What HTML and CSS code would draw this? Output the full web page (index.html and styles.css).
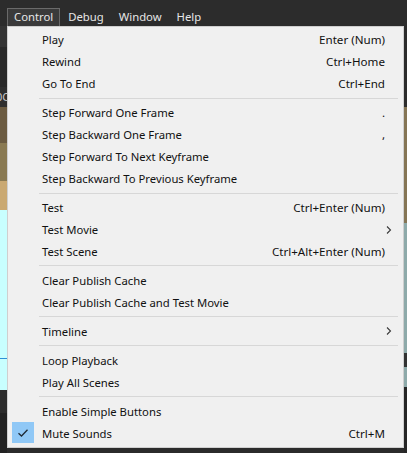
FILE: index.html
```html
<!DOCTYPE html>
<html>
<head>
<meta charset="utf-8">
<link rel="stylesheet" href="styles.css">
</head>
<body>
<div class="app">
  <div class="menubar">
    <span class="mb-item active">Control</span>
    <span class="mb-item">Debug</span>
    <span class="mb-item">Window</span>
    <span class="mb-item">Help</span>
  </div>
  <div class="workspace">
    <div class="edge left">
      <div class="band b1"></div>
      <div class="band b2"></div>
      <div class="band b3"><span class="clip">0C</span></div>
      <div class="band b4"></div>
      <div class="band b5"></div>
      <div class="band b6"></div>
      <div class="band b7"><div class="blueline"></div></div>
      <div class="band b8"></div>
      <div class="band b9"></div>
    </div>
    <div class="middle"></div>
    <div class="edge right">
      <div class="band r1"></div>
      <div class="band r2"></div>
      <div class="band r3"></div>
      <div class="band r4"></div>
      <div class="band r5"></div>
      <div class="band r6"></div>
    </div>
  </div>

  <div class="dropdown">
    <div class="row"><span class="label">Play</span><span class="key">Enter (Num)</span></div>
    <div class="row"><span class="label">Rewind</span><span class="key">Ctrl+Home</span></div>
    <div class="row"><span class="label">Go To End</span><span class="key">Ctrl+End</span></div>
    <div class="sep"></div>
    <div class="row"><span class="label">Step Forward One Frame</span><span class="key">.</span></div>
    <div class="row"><span class="label">Step Backward One Frame</span><span class="key">,</span></div>
    <div class="row"><span class="label">Step Forward To Next Keyframe</span><span class="key"></span></div>
    <div class="row"><span class="label">Step Backward To Previous Keyframe</span><span class="key"></span></div>
    <div class="sep"></div>
    <div class="row"><span class="label">Test</span><span class="key">Ctrl+Enter (Num)</span></div>
    <div class="row"><span class="label">Test Movie</span><span class="key"></span><svg class="arrow" width="6" height="8" viewBox="0 0 6 8"><path d="M1 0.5 L4.5 4 L1 7.5" fill="none" stroke="#3a3a3a" stroke-width="1.1"/></svg></div>
    <div class="row"><span class="label">Test Scene</span><span class="key">Ctrl+Alt+Enter (Num)</span></div>
    <div class="sep"></div>
    <div class="row"><span class="label">Clear Publish Cache</span><span class="key"></span></div>
    <div class="row"><span class="label">Clear Publish Cache and Test Movie</span><span class="key"></span></div>
    <div class="sep"></div>
    <div class="row"><span class="label">Timeline</span><span class="key"></span><svg class="arrow" width="6" height="8" viewBox="0 0 6 8"><path d="M1 0.5 L4.5 4 L1 7.5" fill="none" stroke="#3a3a3a" stroke-width="1.1"/></svg></div>
    <div class="sep"></div>
    <div class="row"><span class="label">Loop Playback</span><span class="key"></span></div>
    <div class="row"><span class="label">Play All Scenes</span><span class="key"></span></div>
    <div class="sep"></div>
    <div class="row"><span class="label">Enable Simple Buttons</span><span class="key"></span></div>
    <div class="row checked">
      <span class="check"><svg width="12" height="10" viewBox="0 0 12 10"><path d="M1.5 5.2 L4.5 8 L10.5 1.8" fill="none" stroke="#1e2a36" stroke-width="1.3"/></svg></span>
      <span class="label">Mute Sounds</span><span class="key">Ctrl+M</span>
    </div>
  </div>
</div>
</body>
</html>
```
FILE: styles.css
```css
* { box-sizing: border-box; }
html, body { margin: 0; padding: 0; }
body {
  width: 407px;
  height: 453px;
  overflow: hidden;
  background: #2b2b2b;
  font-family: "Noto Sans", "Segoe UI", sans-serif;
}
.app {
  position: relative;
  width: 407px;
  height: 453px;
  display: flex;
  flex-direction: column;
}
.menubar {
  height: 26px;
  background: #2c2c2c;
  display: flex;
  align-items: flex-end;
  padding-left: 7px;
  flex: none;
}
.mb-item {
  height: 18px;
  line-height: 16px;
  padding: 0 6px 0 6px;
  margin-right: 1px;
  color: #e6e6e6;
  font-size: 11.3px;
  border: 1px solid transparent;
  border-bottom: none;
}
.mb-item.active {
  background: #3a3a3a;
  border-color: #6a6a6a;
}
.workspace {
  flex: 1;
  display: flex;
}
.edge {
  display: flex;
  flex-direction: column;
}
.edge.left { width: 7px; }
.middle { flex: 1; }
.edge.right { width: 3px; }
.band { flex: none; position: relative; overflow: hidden; }
.b1 { height: 21px; background: #343434; }
.b2 { height: 40px; background: #292929; }
.b3 { height: 20px; background: #2f2f2f; color: #c8c8c8; font-size: 11px; line-height: 20px; white-space: nowrap; }
.clip { display: block; margin-left: -4px; }
.b4 { height: 36px; background: #6b5b41; }
.b5 { height: 38px; background: #8a7a52; }
.b6 { height: 29px; background: #caa972; }
.b7 { height: 180px; background: #c8ffff; }
.blueline { position: absolute; left: 0; right: 0; top: 148px; height: 1px; background: #2f8fd6; }
.b8 { height: 23px; background: #2c2c2c; }
.b9 { flex: 1; background: #222; }
.r1 { height: 81px; background: #2c2c2c; }
.r2 { height: 116px; background: #857555; }
.r3 { height: 130px; background: #8eaaaa; }
.r4 { height: 14px; background: #333; }
.r5 { height: 20px; background: #8eaaaa; }
.r6 { flex: 1; background: #262626; }

.dropdown {
  position: absolute;
  left: 7px;
  top: 26px;
  width: 397px;
  height: 422px;
  background: #f0f0f0;
  border: 1px solid #cfcfcf;
  padding: 2px 0 3px 2px;
  display: flex;
  flex-direction: column;
  font-size: 11.3px;
  color: #111;
}
.row {
  height: 22px;
  display: flex;
  align-items: center;
  padding-left: 32px;
  padding-right: 18px;
  position: relative;
}
.label { flex: 1; white-space: nowrap; }
.key { white-space: nowrap; font-size: 11.6px; }
.arrow {
  position: absolute;
  right: 11px;
  top: 7px;
}
.sep {
  height: 7px;
  margin: 0 5px 0 29px;
  display: flex;
  align-items: center;
}
.sep::after {
  content: "";
  flex: 1;
  height: 1px;
  background: #d7d7d7;
}
.check {
  position: absolute;
  left: 2px;
  top: 0;
  width: 22px;
  height: 21px;
  background: #90c8f6;
  display: flex;
  align-items: center;
  justify-content: center;
}
```
